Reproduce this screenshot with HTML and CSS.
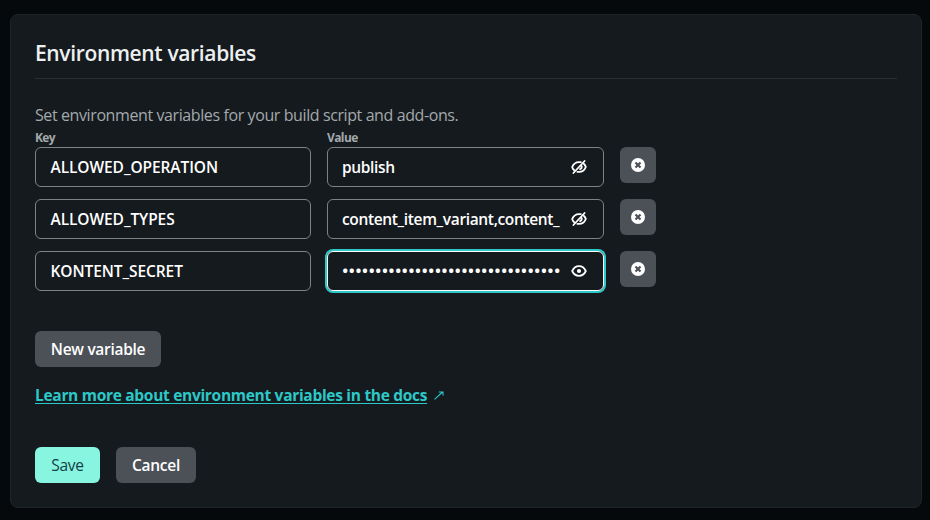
FILE: index.html
```html
<!DOCTYPE html>
<html lang="en">
<head>
<meta charset="utf-8">
<title>Environment variables</title>
<link rel="stylesheet" href="styles.css">
</head>
<body>
<svg class="sprite" aria-hidden="true">
  <symbol id="eye" viewBox="0 0 16 16">
    <path d="M1.2 8C2.6 5 5 3.1 8 3.1S13.4 5 14.8 8C13.4 11 11 12.900 8 12.900S2.600 11 1.200 8Z" fill="none" stroke="currentColor" stroke-width="1.800" stroke-linejoin="round"/>
    <circle cx="8" cy="8" r="2.100" fill="currentColor"/>
  </symbol>
  <symbol id="eye-off" viewBox="0 0 16 16">
    <path d="M9.800 3.200C5.600 2.500 2.500 4.800 1.200 8C1.500 9.200 2.100 10.200 3 11M6.400 12.800C10.400 13.500 13.500 11.200 14.800 8C14.500 6.800 13.900 5.800 13 5M2.400 14 13.600 2M10.700 7.200C10.900 8.500 10.300 9.700 9.100 10.200" fill="none" stroke="currentColor" stroke-width="1.800" stroke-linecap="round"/>
  </symbol>
  <symbol id="remove" viewBox="0 0 14 14">
    <circle cx="7" cy="7" r="7" fill="currentColor"/>
    <path d="M4.500 4.500 9.500 9.500M9.500 4.500 4.500 9.500" fill="none" stroke="#4c5157" stroke-width="2.200"/>
  </symbol>
</svg>
<main class="card">
  <h1 class="title"><span>Environment variables</span></h1>
  <p class="intro">Set environment variables for your build script and add-ons.</p>
  <div class="labels"><span>Key</span><span>Value</span></div>
  <div class="rows">
    <div class="field"><span class="text key">ALLOWED_OPERATION</span></div>
    <div class="field"><span class="text">publish</span><svg class="eye"><use href="#eye-off"/></svg></div>
    <button class="btn icon" aria-label="Remove"><svg><use href="#remove"/></svg></button>
    <div class="field"><span class="text key">ALLOWED_TYPES</span></div>
    <div class="field"><span class="text">content_item_variant,content_</span><svg class="eye"><use href="#eye-off"/></svg></div>
    <button class="btn icon" aria-label="Remove"><svg><use href="#remove"/></svg></button>
    <div class="field"><span class="text key">KONTENT_SECRET</span></div>
    <div class="field focused"><span class="text dots">•••••••••••••••••••••••••••••••••</span><svg class="eye"><use href="#eye"/></svg></div>
    <button class="btn icon" aria-label="Remove"><svg><use href="#remove"/></svg></button>
  </div>
  <button class="btn new"><span>New variable</span></button>
  <div class="learn"><a class="link" href="#">Learn more about environment variables in the docs</a><svg class="arrow" viewBox="0 0 10 9"><path d="M.5 8.300 8.600 1M4.800 1H9V4.500" fill="none" stroke="currentColor" stroke-width="1.100"/></svg></div>
  <div class="actions"><button class="btn save"><span>Save</span></button><button class="btn cancel"><span>Cancel</span></button></div>
</main>
</body>
</html>
```
FILE: styles.css
```css
* { box-sizing: border-box; }
body {
  margin: 0;
  height: 520px;
  padding: 14px 8px 12px 10px;
  background: #05090c;
  font-family: "Open Sans", "Noto Sans", sans-serif;
  font-size: 15.5px;
  color: #fff;
  overflow: hidden;
}
.sprite { display: none; }
.card {
  height: 494px;
  padding: 24px 24px 0;
  background: #151a1e;
  border: 1px solid #1f2427;
  border-radius: 8px;
}
.title {
  margin: 0;
  height: 40px;
  border-bottom: 1px solid #2c3033;
  font-size: 21px;
  line-height: 29px;
  font-weight: 600;
  letter-spacing: -.35px;
  color: #edf0f1;
  white-space: nowrap;
}
.intro {
  margin: 24px 0 0;
  line-height: 24px;
  font-size: 16px;
  letter-spacing: -.4px;
  color: #a3a9ac;
  white-space: nowrap;
}
.labels {
  display: grid;
  grid-template-columns: 276px 277px;
  column-gap: 16px;
  height: 20px;
  font-size: 12px;
  line-height: 22px;
  font-weight: 700;
  letter-spacing: -.6px;
  color: #a3a9ac;
}
.rows {
  display: grid;
  grid-template-columns: 276px 277px 36px;
  grid-auto-rows: 40px;
  gap: 12px 16px;
}
.field {
  display: flex;
  align-items: center;
  justify-content: space-between;
  padding: 0 16px 0 14px;
  border: 1px solid #7d8287;
  border-radius: 6px;
  font-weight: 600;
}
.text { white-space: nowrap; letter-spacing: -.35px; }
.key { margin-left: .5px; letter-spacing: -.08px; }
.focused { border-color: #fff; box-shadow: 0 0 0 2px #2dc8c8; }
.dots { font-size: 17px; letter-spacing: .23px; line-height: 20px; }
.eye { width: 16px; height: 16px; flex: none; }
.btn {
  display: flex;
  align-items: center;
  justify-content: center;
  height: 36px;
  padding: 0;
  border: 0;
  border-radius: 6px;
  background: #4c5157;
  color: #fff;
  font: 600 15.5px "Open Sans", "Noto Sans", sans-serif;
  letter-spacing: -.3px;
  white-space: nowrap;
}
.icon { width: 36px; }
.icon svg { width: 14px; height: 14px; }
.new { width: 126px; margin-top: 40px; }
.learn {
  display: flex;
  align-items: center;
  gap: 7px;
  height: 24px;
  margin-top: 16px;
  color: #2dc8c8;
}
.link {
  color: inherit;
  font-weight: 700;
  letter-spacing: -.3px;
  text-decoration: underline;
  text-decoration-thickness: 1px;
  text-underline-offset: 2px;
  white-space: nowrap;
}
.arrow { width: 10px; height: 9px; }
.actions { display: flex; gap: 16px; margin-top: 40px; }
.save { width: 65px; background: #87f5df; color: #163e48; font-weight: 400; }
.cancel { width: 80px; }
```
